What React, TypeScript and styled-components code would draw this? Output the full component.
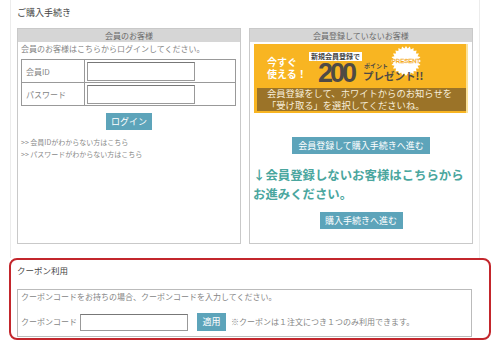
import React from "react";
import styled, { createGlobalStyle } from "styled-components";

const GlobalStyle = createGlobalStyle`
  body {
    margin: 0;
    background: #fff;
    font-family: "Noto Sans CJK JP", "Liberation Sans", sans-serif;
    color: #858585;
  }
  * { box-sizing: border-box; }
`;

const Page = styled.div`
  margin-left: 10px;
  width: 470px;
  border-left: 1px solid #ececec;
  border-right: 1px solid #ececec;
  padding: 7px 6px 14px 6px;
`;

const Title = styled.div`
  font-size: 9px;
  line-height: 12px;
  color: #444;
  margin-bottom: 9px;
`;

const Columns = styled.div`
  display: grid;
  grid-template-columns: 224px 224px;
  gap: 8px;
  height: 216px;
`;

const Box = styled.div`
  border: 1px solid #c9c9c9;
  display: flex;
  flex-direction: column;
`;

const BoxHead = styled.div`
  height: 13px;
  line-height: 13px;
  background: #d6d6d6;
  text-align: center;
  font-size: 8px;
  color: #6a6a6a;
`;

const Intro = styled.div`
  font-size: 8px;
  line-height: 12px;
  padding: 1px 0 0 3px;
`;

const LoginTable = styled.table`
  width: 215px;
  margin: 4px 0 0 3px;
  border-collapse: collapse;
  border: 1px solid #999;
  td {
    border: 1px solid #999;
    height: 23px;
    padding: 0;
  }
`;

const Label = styled.td`
  width: 63px;
  font-size: 8px;
  padding-left: 4px !important;
`;

const TextInput = styled.input<{ $w: number; $h: number; $ml?: number }>`
  display: block;
  width: ${(p) => p.$w}px;
  height: ${(p) => p.$h}px;
  border: 1px solid #999;
  border-top-color: #777;
  margin: 0 0 0 ${(p) => p.$ml ?? 2}px;
  padding: 0;
  background: #fff;
`;

const Button = styled.div<{ $w?: number; $h?: number; $ml?: number }>`
  display: inline-block;
  ${(p) => (p.$w ? `width: ${p.$w}px;` : "padding: 0 6px;")}
  height: ${(p) => p.$h ?? 17}px;
  line-height: ${(p) => p.$h ?? 17}px;
  margin-left: ${(p) => p.$ml ?? 0}px;
  background: #5da4ba;
  color: #fff;
  font-size: 9px;
  text-align: center;
  white-space: nowrap;
  flex-shrink: 0;
`;

const Center = styled.div<{ $mt: number }>`
  display: flex;
  justify-content: center;
  margin-top: ${(p) => p.$mt}px;
`;

const Links = styled.div`
  margin-top: 6px;
  padding-left: 3px;
  font-size: 7px;
  line-height: 12px;
  color: #8a8a8a;
`;

const Banner = styled.div`
  width: 214px;
  height: 69px;
  margin: 2px auto 0;
  background: #f8b522;
  border-right: 2px solid #fbe29a;
  display: flex;
  flex-direction: column;
`;

const BannerTop = styled.div`
  position: relative;
  height: 44px;
  display: flex;
`;

const Catch = styled.div`
  margin: 12px 0 0 13px;
  font-size: 10px;
  line-height: 12px;
  font-weight: bold;
  color: #fff;
  width: 42px;
`;

const Offer = styled.div`
  margin: 8px 0 0 0;
  position: relative;
  z-index: 1;
  font-size: 7px;
  line-height: 9px;
`;

const Tag = styled.div`
  width: fit-content;
  background: #fff;
  height: 9px;
  line-height: 9px;
  padding: 0 2px;
  font-size: 7px;
  font-weight: bold;
  color: #444;
`;

const OfferRow = styled.div`
  display: flex;
  height: 22px;
  margin-top: 1px;
  margin-left: 9px;
`;

const Big = styled.div`
  font-family: "Liberation Sans", sans-serif;
  font-size: 27px;
  line-height: 22px;
  font-weight: bold;
  letter-spacing: -3px;
  color: #4f4a45;
`;

const PresentCol = styled.div`
  margin-left: 9px;
  display: flex;
  flex-direction: column;
  color: #4f4a45;
  font-weight: bold;
`;

const Small = styled.div`
  font-size: 6px;
  line-height: 6px;
  margin: 1px 0 0 1px;
`;

const Present = styled.div`
  font-size: 10.5px;
  line-height: 13px;
  white-space: nowrap;
`;

const Burst = styled.svg`
  position: absolute;
  left: 137px;
  top: 2px;
`;

const BannerNote = styled.div`
  margin-left: 3px;
  height: 23px;
  background: #9b7328;
  color: #f7eedb;
  font-size: 9.3px;
  line-height: 11.5px;
  padding-left: 10px;
  white-space: nowrap;
`;

const Guide = styled.div`
  margin-top: 12px;
  padding-left: 3px;
  font-size: 12.4px;
  line-height: 19px;
  font-weight: bold;
  color: #4aa69e;
  white-space: nowrap;
`;

const Coupon = styled.div`
  margin-left: 9px;
  width: 482px;
  border: 2px solid #c3262c;
  border-radius: 8px;
  padding: 4px 17px 1px 6px;
`;

const CouponTitle = styled.div`
  font-size: 8.5px;
  line-height: 12px;
  color: #444;
`;

const CouponBox = styled.div`
  margin-top: 13px;
  height: 48px;
  border: 1px solid #bbb;
  padding: 1px 0 0 3px;
  font-size: 8px;
  line-height: 12px;
`;

const CouponRow = styled.div`
  display: flex;
  align-items: center;
  height: 18px;
  margin-top: 10px;
`;

const Note = styled.span`
  margin-left: 5px;
`;

const starPoints = (() => {
  const pts: string[] = [];
  const n = 24;
  for (let i = 0; i < n * 2; i++) {
    const r = i % 2 === 0 ? 15 : 12.5;
    const a = (Math.PI * i) / n;
    pts.push(`${(15 + r * Math.cos(a)).toFixed(2)},${(15 + r * Math.sin(a)).toFixed(2)}`);
  }
  return pts.join(" ");
})();

const App = () => {
  return (
    <>
      <GlobalStyle />
      <Page>
        <Title>ご購入手続き</Title>
        <Columns>
          <Box>
            <BoxHead>会員のお客様</BoxHead>
            <Intro>会員のお客様はこちらからログインしてください。</Intro>
            <LoginTable>
              <tbody>
                <tr>
                  <Label>会員ID</Label>
                  <td>
                    <TextInput $w={108} $h={19} />
                  </td>
                </tr>
                <tr>
                  <Label>パスワード</Label>
                  <td>
                    <TextInput $w={108} $h={19} type="password" />
                  </td>
                </tr>
              </tbody>
            </LoginTable>
            <Center $mt={7}>
              <Button $w={46}>ログイン</Button>
            </Center>
            <Links>
              &gt;&gt; 会員IDがわからない方はこちら
              <br />
              &gt;&gt; パスワードがわからない方はこちら
            </Links>
          </Box>
          <Box>
            <BoxHead>会員登録していないお客様</BoxHead>
            <Banner>
              <BannerTop>
                <Catch>
                  今すぐ
                  <br />
                  使える！
                </Catch>
                <Burst width="30" height="30" viewBox="0 0 30 30">
                  <polygon points={starPoints} fill="#fff" />
                  <text
                    x="15"
                    y="17"
                    textAnchor="middle"
                    fontSize="6"
                    fontFamily="Liberation Sans, sans-serif"
                    fill="#fff"
                    stroke="#f3a81c"
                    strokeWidth="0.4"
                  >
                    PRESENT
                  </text>
                </Burst>
                <Offer>
                  <Tag>新規会員登録で</Tag>
                  <OfferRow>
                    <Big>200</Big>
                    <PresentCol>
                      <Small>ポイント</Small>
                      <Present>プレゼント!!</Present>
                    </PresentCol>
                  </OfferRow>
                </Offer>
              </BannerTop>
              <BannerNote>
                会員登録をして、ホワイトからのお知らせを
                <br />
                「受け取る」を選択してくださいね。
              </BannerNote>
            </Banner>
            <Center $mt={24}>
              <Button>会員登録して購入手続きへ進む</Button>
            </Center>
            <Guide>
              ↓会員登録しないお客様はこちらから
              <br />
              お進みください。
            </Guide>
            <Center $mt={8}>
              <Button $w={83}>購入手続きへ進む</Button>
            </Center>
          </Box>
        </Columns>
      </Page>
      <Coupon>
        <CouponTitle>クーポン利用</CouponTitle>
        <CouponBox>
          クーポンコードをお持ちの場合、クーポンコードを入力してください。
          <CouponRow>
            <span>クーポンコード</span>
            <TextInput $w={108} $h={17} $ml={3} />
            <Button $w={29} $h={18} $ml={9}>
              適用
            </Button>
            <Note>※クーポンは１注文につき１つのみ利用できます。</Note>
          </CouponRow>
        </CouponBox>
      </Coupon>
    </>
  );
};

export default App;
